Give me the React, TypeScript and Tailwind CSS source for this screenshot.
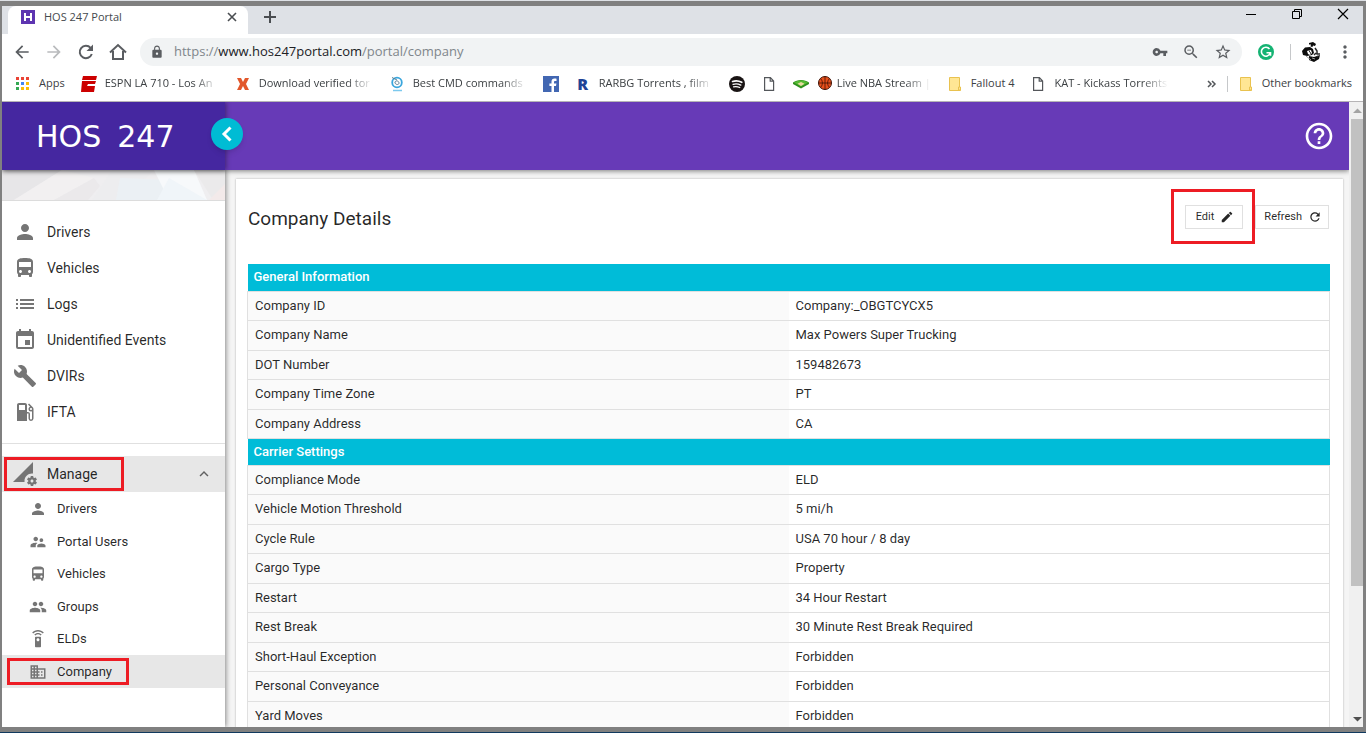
import type { ReactNode } from "react";
import type { IconType } from "react-icons";
import {
  MdArrowBack,
  MdArrowForward,
  MdBuild,
  MdDirectionsBus,
  MdDomain,
  MdEdit,
  MdEvent,
  MdExpandLess,
  MdHelpOutline,
  MdList,
  MdLocalGasStation,
  MdLock,
  MdMoreVert,
  MdPeople,
  MdPermDataSetting,
  MdPerson,
  MdRefresh,
  MdSettingsRemote,
  MdStarBorder,
  MdSupervisorAccount,
  MdVpnKey,
  MdZoomOut,
} from "react-icons/md";

type NavItem = { label: string; icon: IconType };

type Section = { title: string; rows: [string, string][] };

const mainNav: NavItem[] = [
  { label: "Drivers", icon: MdPerson },
  { label: "Vehicles", icon: MdDirectionsBus },
  { label: "Logs", icon: MdList },
  { label: "Unidentified Events", icon: MdEvent },
  { label: "DVIRs", icon: MdBuild },
  { label: "IFTA", icon: MdLocalGasStation },
];

const manageNav: NavItem[] = [
  { label: "Drivers", icon: MdPerson },
  { label: "Portal Users", icon: MdSupervisorAccount },
  { label: "Vehicles", icon: MdDirectionsBus },
  { label: "Groups", icon: MdPeople },
  { label: "ELDs", icon: MdSettingsRemote },
  { label: "Company", icon: MdDomain },
];

const sections: Section[] = [
  {
    title: "General Information",
    rows: [
      ["Company ID", "Company:_OBGTCYCX5"],
      ["Company Name", "Max Powers Super Trucking"],
      ["DOT Number", "159482673"],
      ["Company Time Zone", "PT"],
      ["Company Address", "CA"],
    ],
  },
  {
    title: "Carrier Settings",
    rows: [
      ["Compliance Mode", "ELD"],
      ["Vehicle Motion Threshold", "5 mi/h"],
      ["Cycle Rule", "USA 70 hour / 8 day"],
      ["Cargo Type", "Property"],
      ["Restart", "34 Hour Restart"],
      ["Rest Break", "30 Minute Rest Break Required"],
      ["Short-Haul Exception", "Forbidden"],
      ["Personal Conveyance", "Forbidden"],
      ["Yard Moves", "Forbidden"],
    ],
  },
];

const appColors = [
  "#ea4335", "#ea4335", "#ea4335",
  "#34a853", "#4285f4", "#fbbc05",
  "#34a853", "#fbbc05", "#fbbc05",
];

function AppsIcon() {
  return (
    <svg viewBox="0 0 16 16" className="size-4 shrink-0">
      {appColors.map((color, i) => (
        <rect key={i} x={1 + (i % 3) * 5} y={1 + Math.floor(i / 3) * 5} width="3" height="3" fill={color} />
      ))}
    </svg>
  );
}

function EspnIcon() {
  return (
    <svg viewBox="0 0 16 16" className="size-4 shrink-0" fill="#cc0000">
      <path d="M2 0h14l-1 4H1zM1 5h14l-1 3H7l-1 2h8l-1 6H0z" />
    </svg>
  );
}

function CrossIcon() {
  return (
    <svg viewBox="0 0 16 16" className="size-4 shrink-0">
      <path d="M2 2h4l2 4 2-4h4l-3 6 3 6h-4l-2-4-2 4H2l3-6z" fill="#e2572b" />
    </svg>
  );
}

function SwirlIcon() {
  return (
    <svg viewBox="0 0 16 16" className="size-4 shrink-0" fill="none">
      <circle cx="8" cy="6.500" r="4.800" stroke="#3aa6dd" strokeWidth="1.800" />
      <path d="M6 6c1-2 4-1 4 1s-3 2-4 0zM3 1.500l5 2.500" stroke="#5b7f95" />
      <path d="M4 14.500h9" stroke="#7cc9ee" strokeWidth="1.500" />
    </svg>
  );
}

function FacebookIcon() {
  return (
    <svg viewBox="0 0 16 16" className="size-4 shrink-0">
      <path d="M0 0h16v16H0z" fill="#4267b2" />
      <path d="M11 16v-6h2l.4-2.400H11V6.200c0-.8.3-1.200 1.200-1.200h1.300V2.700C13 2.600 12.300 2.600 11.600 2.600 9.700 2.600 8.500 3.700 8.500 5.800v1.800H6.400V10h2.100v6z" fill="#fff" />
    </svg>
  );
}

function RarbgIcon() {
  return (
    <span className="w-4 shrink-0 text-center text-[16px] leading-6 font-extrabold text-[#1f4396]">R</span>
  );
}

function SpotifyIcon() {
  return (
    <svg viewBox="0 0 16 16" className="size-4 shrink-0" fill="none" stroke="#fff" strokeLinecap="round">
      <circle cx="8" cy="8" r="8" fill="#191414" stroke="none" />
      <path d="M3.500 5.500c3-1 6.500-.7 9.300.8" strokeWidth="1.600" />
      <path d="M4 8.300c2.600-.8 5.400-.5 7.800.8" strokeWidth="1.300" />
      <path d="M4.500 10.900c2.200-.6 4.300-.3 6.300.7" strokeWidth="1.100" />
    </svg>
  );
}

function PageIcon() {
  return (
    <svg viewBox="0 0 16 16" className="size-4 shrink-0" fill="none" stroke="#54575b" strokeWidth="1.200">
      <path d="M3.600 1.600h5.800l3.200 3.400v9.400h-9zM9.200 1.600V5.200h3.400" />
    </svg>
  );
}

function FieldIcon() {
  return (
    <svg viewBox="0 0 16 16" className="size-4 shrink-0">
      <path d="M0 6.500C4 3 12 3 16 6.500v1.500L8 12.500 0 8z" fill="#2f8f1d" />
      <path d="M1 6.500C5 3.800 11 3.800 15 6.500L8 10.500z" fill="#55bb33" />
      <path d="M8 6l3.500 1.700L8 9.900 4.500 7.700z" fill="#e8d9a0" />
    </svg>
  );
}

function BallIcon() {
  return (
    <svg viewBox="0 0 16 16" className="mr-1 inline size-4 align-[-4px]" fill="none" stroke="#3d1206">
      <circle cx="8" cy="8" r="6.500" fill="#e8501c" />
      <path d="M8 1.500v13M1.500 8h13M3.500 3.500c2.500 2.500 2.500 6.500 0 9M12.500 3.500c-2.500 2.500-2.500 6.500 0 9" strokeWidth=".8" />
    </svg>
  );
}

function FolderIcon() {
  return (
    <svg viewBox="0 0 16 16" className="size-4 shrink-0">
      <path d="M2.500 1.500h10v10h1v3h-11z" fill="#ffe694" stroke="#e9c24f" />
      <path d="M11.500 14v-3h2v3z" fill="#ffe694" stroke="#e9c24f" />
    </svg>
  );
}

function Favicon() {
  return (
    <svg viewBox="0 0 14 14" className="size-[14px] shrink-0">
      <path d="M0 0h14v14H0z" fill="#5e35b1" />
      <path d="M4 3v8M10 3v8M4 7h6" stroke="#fff" strokeWidth="2" />
    </svg>
  );
}

function HomeIcon() {
  return (
    <svg viewBox="0 0 20 20" className="size-5" fill="none" stroke="#5a5d61" strokeWidth="2">
      <path d="M2 10.500 10 3l8 7.500M5 9v8h10V9" />
    </svg>
  );
}

function ReloadIcon() {
  return (
    <svg viewBox="0 0 20 20" className="size-5">
      <path d="M15.800 12A6.200 6.200 0 1 1 14.600 5.800" fill="none" stroke="#5a5d61" strokeWidth="2" />
      <path d="M17 2.500v6.500h-6.500z" fill="#5a5d61" />
    </svg>
  );
}

function GrammarlyIcon() {
  return (
    <svg viewBox="0 0 16 16" className="size-4" fill="none" stroke="#fff" strokeWidth="1.600">
      <circle cx="8" cy="8" r="8" fill="#15b373" stroke="none" />
      <path d="M11.500 5A4.500 4.500 0 1 0 12 9.500M8.500 8.800h4v3" />
    </svg>
  );
}

function AvatarIcon() {
  return (
    <svg viewBox="0 0 20 20" className="size-5">
      <path d="M8 1l4-1 3 2-1 2-2-.5-.5 1.500-2-.5.500-2L8 2.500zM1 9l3-3.500 5-.5 3 2 1 4-2 2-5 1-4-1zM8 14l5 1 6-2-1 4-5 3-5-2z" fill="#0c0c0c" />
      <path d="M6 9l4-1 1 3-2 2-2-1z" fill="#fff" />
      <path d="M8 9.500h1M9 11h1M14 6l2 3v3h3M15 11l-2 2M16 14l1 1" stroke="#2b2b2b" strokeWidth="1.500" fill="none" />
      <path d="M5 14l5 4M11 16l3 1" stroke="#9a9a9a" fill="none" />
    </svg>
  );
}

function Bookmark({ icon, long, children }: { icon: ReactNode; long?: boolean; children?: ReactNode }) {
  return (
    <a href="#" className="flex shrink-0 items-center gap-2">
      {icon}
      {children && (
        <span
          className={`whitespace-nowrap ${long ? "w-[114px] [mask-image:linear-gradient(to_right,black_88px,transparent_114px)]" : ""}`}
        >
          {children}
        </span>
      )}
    </a>
  );
}

// Red frame that points the reader at a control
function Highlight({ className }: { className: string }) {
  return <span className={`pointer-events-none absolute z-10 border-3 border-[#ed1c24] ${className}`} />;
}

function TabStrip() {
  return (
    <div className="flex h-7 shrink-0 bg-[#dee1e6] text-[11px] text-[#45494d]">
      <div className="w-[6px]" />
      <div className="flex w-60 items-center rounded-t-lg bg-white pr-2.5 pb-1.5 pl-[13px]">
        <Favicon />
        <span className="ml-[9px] flex-1">HOS 247 Portal</span>
        <button aria-label="Close tab">
          <svg viewBox="0 0 12 12" className="size-3" stroke="#4a4d51" strokeWidth="1.600">
            <path d="M2 2l8 8M10 2l-8 8" />
          </svg>
        </button>
      </div>
      <button aria-label="New tab" className="mb-1.5 ml-3.5">
        <svg viewBox="0 0 16 16" className="size-4" stroke="#4a4d51" strokeWidth="2">
          <path d="M8 2v12M2 8h12" />
        </svg>
      </button>
      <div className="mr-3.5 mb-3 ml-auto flex items-center gap-[34px]">
        <button aria-label="Minimize">
          <svg viewBox="0 0 12 12" className="size-3" stroke="#000">
            <path d="M1 6.500h10" />
          </svg>
        </button>
        <button aria-label="Restore">
          <svg viewBox="0 0 12 12" className="size-3" fill="none" stroke="#000">
            <path d="M1.500 3.500h7v7h-7zM3.500 3.500v-2h7v7h-2" />
          </svg>
        </button>
        <button aria-label="Close window">
          <svg viewBox="0 0 12 12" className="size-3" stroke="#000" strokeWidth="1.200">
            <path d="M1 1l10 10M11 1 1 11" />
          </svg>
        </button>
      </div>
    </div>
  );
}

function Toolbar() {
  return (
    <div className="flex h-9 shrink-0 items-center pr-2 pl-2.5 text-[#5a5d61]">
      <div className="flex items-center gap-3">
        <button aria-label="Back"><MdArrowBack className="size-5" /></button>
        <button aria-label="Forward"><MdArrowForward className="size-5 text-[#b9bbbd]" /></button>
        <button aria-label="Reload"><ReloadIcon /></button>
        <button aria-label="Home"><HomeIcon /></button>
      </div>
      <div className="ml-3 flex h-7 flex-1 items-center rounded-full bg-[#f1f3f4] pr-2.5 pl-2.5">
        <MdLock className="size-3.5" />
        <span className="ml-2.5 flex-1 text-[13px] text-[#80868b]">
          https://<span className="text-[#202124]">www.hos247portal.com</span>/portal/company
        </span>
        <div className="flex items-center gap-3.5">
          <MdVpnKey className="size-4" />
          <MdZoomOut className="size-[18px]" />
          <MdStarBorder className="size-[18px]" />
        </div>
      </div>
      <div className="ml-4 flex items-center">
        <GrammarlyIcon />
        <span className="ml-4 h-4 w-px bg-[#c6c8ca]" />
        <span className="ml-2.5"><AvatarIcon /></span>
        <button aria-label="Menu" className="ml-3.5"><MdMoreVert className="size-5" /></button>
      </div>
    </div>
  );
}

function BookmarksBar() {
  return (
    <div className="flex h-8 shrink-0 items-center border-b border-[#b6b4b6] pr-[11px] pb-1 pl-[13px] text-[11px] text-[#3c4043]">
      <div className="flex min-w-0 flex-1 items-center gap-4 overflow-hidden">
        <Bookmark icon={<AppsIcon />}>Apps</Bookmark>
        <Bookmark icon={<EspnIcon />} long>ESPN LA 710 - Los An</Bookmark>
        <Bookmark icon={<CrossIcon />} long>Download verified tor</Bookmark>
        <Bookmark icon={<SwirlIcon />} long>Best CMD commands</Bookmark>
        <Bookmark icon={<FacebookIcon />} />
        <Bookmark icon={<RarbgIcon />} long>RARBG Torrents , film</Bookmark>
        <Bookmark icon={<SpotifyIcon />} />
        <Bookmark icon={<PageIcon />} />
        <Bookmark icon={<FieldIcon />} long><BallIcon />Live NBA Stream |</Bookmark>
        <Bookmark icon={<FolderIcon />}>Fallout 4</Bookmark>
        <Bookmark icon={<PageIcon />} long>KAT - Kickass Torrents</Bookmark>
      </div>
      <button aria-label="More bookmarks">
        <svg viewBox="0 0 10 10" className="size-2.5" fill="none" stroke="#54575b" strokeWidth="1.500">
          <path d="M1 2l3 3-3 3M5 2l3 3-3 3" />
        </svg>
      </button>
      <span className="mr-2.5 ml-2.5 h-4 w-px bg-[#c6c8ca]" />
      <Bookmark icon={<FolderIcon />}>Other bookmarks</Bookmark>
    </div>
  );
}

function SidebarBanner() {
  return (
    <svg viewBox="0 0 223 30" preserveAspectRatio="none" className="h-[31px] w-full shrink-0 border-b border-[#dcdcdc]">
      <path d="M0 0h223v30H0z" fill="#efeef0" />
      <path d="M0 0h60L12 30H0z" fill="#e7e6e8" />
      <path d="M60 0 12 30h40L92 8z" fill="#f2f0f1" />
      <path d="M92 8 52 30h34l12-14z" fill="#ebe9eb" />
      <path d="M110 0h42l-32 30H90z" fill="#ededef" />
      <path d="M118 8l-4 22h42l14-20z" fill="#ebf0f4" />
      <path d="M152 0h40l13 30h-38z" fill="#f7f9fb" />
      <path d="M167 8l38 22h-50z" fill="#f0f5f9" />
      <path d="M192 0h31v30h-12z" fill="#ebeaeb" />
      <path d="M223 14v16h-16z" fill="#f3eaea" />
    </svg>
  );
}

function Sidebar() {
  return (
    <aside className="z-10 flex w-[223px] shrink-0 flex-col bg-white text-black/85 shadow-[1px_0_5px_rgba(0,0,0,0.45)]">
      <SidebarBanner />
      <nav>
        <ul className="border-b border-[#e0e0e0] pt-[13px] pb-[13px]">
          {mainNav.map(({ label, icon: Icon }) => (
            <li key={label}>
              <a href="#" className="flex h-9 items-center gap-2.5 pl-[11px] text-sm">
                <Icon className="size-6 text-[#757575]" />
                {label}
              </a>
            </li>
          ))}
        </ul>
        <button className="relative mt-3 flex h-9 w-full items-center gap-2.5 bg-[#e7e7e7] pr-3 pl-[11px] text-sm">
          <MdPermDataSetting className="size-6 text-[#757575]" />
          Manage
          <MdExpandLess className="ml-auto size-[18px] text-[#616161]" />
          <Highlight className="top-px left-0.5 h-[34px] w-[120px]" />
        </button>
        <ul className="pt-px">
          {manageNav.map(({ label, icon: Icon }) => (
            <li key={label} className="h-8 even:h-[33px]">
              <a
                href="#"
                className={`relative flex h-full items-center gap-2.5 pl-[27px] text-[13px] ${label === "Company" ? "bg-[#e7e7e7]" : ""}`}
              >
                <Icon className="size-[18px] text-[#757575]" />
                {label}
                {label === "Company" && <Highlight className="top-[3px] left-[5px] h-[27px] w-[122px]" />}
              </a>
            </li>
          ))}
        </ul>
      </nav>
    </aside>
  );
}

function CompanyTable() {
  return (
    <table className="w-full table-fixed border-collapse text-left text-[13px] leading-4">
      {sections.map((section) => (
        <tbody key={section.title}>
          <tr className="h-[27px] bg-[#00bcd8] text-white">
            <th colSpan={2} className="pl-1.5 font-medium">{section.title}</th>
          </tr>
          {section.rows.map(([label, value]) => (
            <tr key={label} className="h-[30px] border border-[#e0e0e0] even:h-[29px]">
              <th scope="row" className="bg-[#fafafa] pl-[7px] font-normal">{label}</th>
              <td className="pl-[7px]">{value}</td>
            </tr>
          ))}
        </tbody>
      ))}
    </table>
  );
}

function Scrollbar() {
  return (
    <div className="flex w-3.5 shrink-0 flex-col bg-[#f0f0f0] pl-0.5">
      <svg viewBox="0 0 12 17" className="h-[17px] w-3">
        <path d="M2 11h9L6.500 6.500z" fill="#a3a3a3" />
      </svg>
      <div className="flex-1">
        <div className="h-[79%] bg-[#c1c1c1]" />
      </div>
      <svg viewBox="0 0 12 17" className="h-[17px] w-3">
        <path d="M2 7h9l-4.500 4.500z" fill="#505050" />
      </svg>
    </div>
  );
}

export default function App() {
  return (
    <div className="flex h-screen flex-col bg-[#dee1e6] pt-px">
      <div className="flex min-h-0 flex-1 flex-col border-x-2 border-t-5 border-r-3 border-b-5 border-[#808080] bg-white font-['Open_Sans',sans-serif]">
        <TabStrip />
        <Toolbar />
        <BookmarksBar />
        <div className="flex min-h-0 flex-1 font-['Roboto',sans-serif]">
          <div className="flex min-w-0 flex-1 flex-col overflow-hidden bg-[#f5f5f5]">
            <header className="z-20 flex h-[68px] shrink-0 bg-[#673ab7] text-white shadow-[0_1px_5px_rgba(0,0,0,0.5)]">
              <div className="relative flex w-[223px] items-center gap-4 bg-[#4527a0] pl-[34px] font-['DejaVu_Sans',sans-serif] text-[30px] shadow-[1px_0_5px_rgba(0,0,0,0.4)]">
                <span>HOS</span>
                <span>247</span>
                <button
                  aria-label="Collapse menu"
                  className="absolute top-4 -right-[18px] flex size-8 items-center justify-center rounded-full bg-[#00bcd4] shadow-md"
                >
                  <svg viewBox="0 0 16 16" className="size-4" fill="none" stroke="#fff" strokeWidth="3">
                    <path d="M11.500 1.500 5 8l6.500 6.500" />
                  </svg>
                </button>
              </div>
              <button aria-label="Help" className="mr-3.5 ml-auto">
                <MdHelpOutline className="size-8" />
              </button>
            </header>
            <div className="flex min-h-0 flex-1">
              <Sidebar />
              <main className="min-w-0 flex-1 overflow-hidden pt-[9px] pr-1.5 pl-[11px]">
                <div className="bg-white pt-[26px] pr-[13px] pb-6 pl-[11px] text-black/85 shadow-[0_0_2px_rgba(0,0,0,0.3)]">
                  <div className="mb-[33px] flex items-start justify-between">
                    <h1 className="mt-0.5 ml-px text-[19px] leading-6">Company Details</h1>
                    <div className="flex gap-3 pr-px text-[11px]">
                      <button className="relative flex h-6 items-center gap-1.5 border border-[#e0e0e0] pr-2 pl-2.5">
                        Edit
                        <MdEdit className="size-3.5" />
                        <Highlight className="-top-[17px] -left-[15px] h-[55px] w-[84px]" />
                      </button>
                      <button className="flex h-6 items-center gap-1.5 border border-[#e0e0e0] pr-1.5 pl-2">
                        Refresh
                        <MdRefresh className="size-3.5" />
                      </button>
                    </div>
                  </div>
                  <CompanyTable />
                </div>
              </main>
            </div>
          </div>
          <Scrollbar />
        </div>
      </div>
      <div className="h-1 shrink-0 border-t border-[#10395f] bg-white" />
    </div>
  );
}
